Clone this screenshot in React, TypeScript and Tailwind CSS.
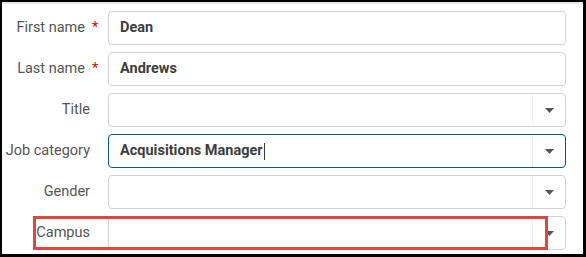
import React from "react";

const Caret = () => (
  <svg width="9" height="5" viewBox="0 0 9 5" className="block">
    <path d="M0 0 H9 L4.5 5 Z" fill="#555" />
  </svg>
);

type RowProps = {
  label: string;
  required?: boolean;
  value?: string;
  select?: boolean;
  focused?: boolean;
  cursor?: boolean;
};

const Row = ({ label, required, value, select, focused, cursor }: RowProps) => (
  <div className="flex items-center h-[34px]">
    <div className="w-[96px] shrink-0 flex justify-end items-center text-[14.5px] text-[#555]">
      <span className={required ? "" : "pr-[8px]"}>{label}</span>
      {required && <span className="text-[#e00] ml-[7px] w-[6px]">*</span>}
    </div>
    <div
      className={`ml-[10px] w-[458px] h-full rounded-[4px] bg-white flex items-center ${
        focused ? "border-[1.5px] border-[#0b5585]" : "border border-[#d3d3d3]"
      }`}
    >
      <div className="flex-1 flex items-center pl-[11px] text-[14.5px] font-bold text-[#3d3d3d]">
        {value}
        {cursor && <span className="inline-block w-px h-[17px] bg-[#333] ml-[1px]" />}
      </div>
      {select && (
        <div className="w-[33px] h-full border-l border-[#f1f1f1] flex items-center justify-center">
          <Caret />
        </div>
      )}
    </div>
  </div>
);

export default function App() {
  return (
    <div
      className="w-[586px] h-[257px] bg-white border-l-2 border-t-2 border-r-[3px] border-b-[3px] border-black relative overflow-hidden"
      style={{ fontFamily: "Roboto, 'Liberation Sans', sans-serif" }}
    >
      <div className="h-[2px] bg-[#e6e6e6]" />
      <div className="flex flex-col gap-[7px] pt-[7px]">
        <Row label="First name" required value="Dean" />
        <Row label="Last name" required value="Andrews" />
        <Row label="Title" select />
        <Row label="Job category" select focused value="Acquisitions Manager" cursor />
        <Row label="Gender" select />
        <Row label="Campus" select />
      </div>
      <div className="absolute left-[31px] top-[214px] w-[515px] h-[34px] border-[3px] border-[#e5443c]" />
    </div>
  );
}
